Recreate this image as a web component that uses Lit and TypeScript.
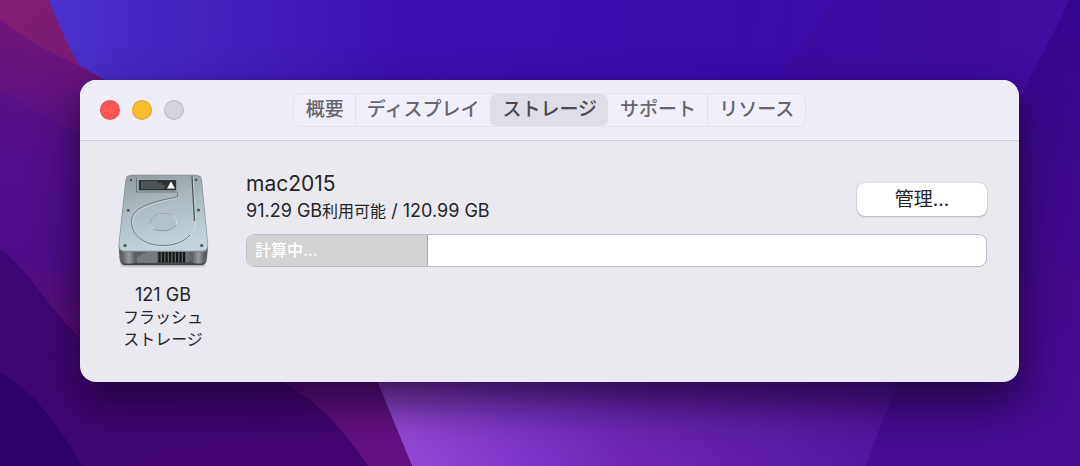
import { LitElement, html, css, svg } from "lit";
import { customElement, state } from "lit/decorators.js";
import { classMap } from "lit/directives/class-map.js";

@customElement("desktop-wallpaper")
class DesktopWallpaper extends LitElement {
  static styles = css`
    :host {
      display: block;
    }
    .art {
      display: block;
      width: 100%;
      height: 100%;
    }
  `;

  render() {
    return html`
      <svg class="art" viewBox="0 0 1080 466" preserveAspectRatio="xMidYMid slice" aria-hidden="true">
        <defs>
          <linearGradient id="sky" gradientUnits="userSpaceOnUse" x1="60" y1="40" x2="1040" y2="60">
            <stop offset="0" stop-color="#4a30cc" />
            <stop offset="0.12" stop-color="#4424c0" />
            <stop offset="0.35" stop-color="#3c10b2" />
            <stop offset="0.7" stop-color="#390cac" />
            <stop offset="1" stop-color="#400fa4" />
          </linearGradient>
          <linearGradient id="east" x1="0" y1="0" x2="0" y2="1">
            <stop offset="0" stop-color="#34068e" />
            <stop offset="0.35" stop-color="#3c0a8c" />
            <stop offset="0.6" stop-color="#420b8c" />
            <stop offset="1" stop-color="#460e92" />
          </linearGradient>
          <linearGradient id="rose" gradientUnits="userSpaceOnUse" x1="10" y1="0" x2="90" y2="80">
            <stop offset="0" stop-color="#821d74" />
            <stop offset="1" stop-color="#741a74" />
          </linearGradient>
          <linearGradient id="west" gradientUnits="userSpaceOnUse" x1="60" y1="40" x2="20" y2="330">
            <stop offset="0" stop-color="#6c1479" />
            <stop offset="0.4" stop-color="#57108a" />
            <stop offset="0.75" stop-color="#500e86" />
            <stop offset="1" stop-color="#5c0e78" />
          </linearGradient>
          <linearGradient id="deep" x1="0" y1="0" x2="1" y2="1">
            <stop offset="0" stop-color="#3c0876" />
            <stop offset="1" stop-color="#440472" />
          </linearGradient>
          <linearGradient id="glow" gradientUnits="userSpaceOnUse" x1="400" y1="466" x2="900" y2="420">
            <stop offset="0" stop-color="#9448d2" />
            <stop offset="0.25" stop-color="#7c36c6" />
            <stop offset="0.5" stop-color="#6a24b0" />
            <stop offset="0.8" stop-color="#5a1aa4" />
            <stop offset="1" stop-color="#50149c" />
          </linearGradient>
        </defs>
        <rect width="1080" height="466" fill="url(#sky)" />
        <path d="M835 0C810 40 785 60 770 100H1080V0Z" fill="#3e0c9a" opacity="0.45" />
        <path d="M1069 0C1052 40 1034 66 1020 100L860 466H1080V0Z" fill="url(#east)" />
        <path d="M300 300H920C910 370 880 420 866 466H300Z" fill="url(#glow)" />
        <path d="M0 0H49C60 28 70 50 80 66L110 84V250H0Z" fill="url(#rose)" />
        <path d="M0 19C24 38 44 50 80 66C94 73 102 78 112 84L300 300L368 360L412 466H0Z" fill="url(#west)" />
        <path d="M0 90C20 98 48 122 84 135V270H0Z" fill="#480e8e" opacity="0.3" />
        <path d="M200 300H344L412 466H280Z" fill="#641082" />
        <path d="M0 250C25 264 45 304 80 338L140 360H240C310 390 340 424 368 466H0Z" fill="url(#deep)" />
        <path d="M0 372C36 394 58 424 82 466H0Z" fill="#2f0068" />
      </svg>
    `;
  }
}

@customElement("drive-icon")
class DriveIcon extends LitElement {
  static styles = css`
    :host {
      display: block;
    }
    .drive {
      display: block;
      width: 100%;
      height: auto;
    }
  `;

  render() {
    const screws = [
      [14, 8],
      [79, 7.8],
      [11.3, 38.3],
      [81.5, 38],
      [8, 73.5],
      [84.7, 73.5],
    ];
    const vents = [0, 1, 2, 3, 4, 5, 6, 7];
    return html`
      <svg class="drive" viewBox="0 0 92 96" role="img" aria-label="内蔵ドライブ">
        <defs>
          <linearGradient id="lid" x1="0" y1="0" x2="0.25" y2="1">
            <stop offset="0" stop-color="#909b9f" />
            <stop offset="0.45" stop-color="#abbac0" />
            <stop offset="1" stop-color="#c2d3da" />
          </linearGradient>
          <linearGradient id="side" x1="0" y1="0" x2="0" y2="1">
            <stop offset="0" stop-color="#4b4f51" />
            <stop offset="0.7" stop-color="#66696b" />
            <stop offset="1" stop-color="#3c3e3f" />
          </linearGradient>
          <linearGradient id="post" x1="0" y1="0" x2="1" y2="0">
            <stop offset="0" stop-color="#5c6062" />
            <stop offset="0.5" stop-color="#979b9d" />
            <stop offset="1" stop-color="#55595b" />
          </linearGradient>
          <filter id="soft" x="-10%" y="-100%" width="120%" height="300%">
            <feGaussianBlur stdDeviation="1.2" />
          </filter>
        </defs>
        <rect x="4" y="89" width="84" height="5" rx="2.5" fill="#55565c" opacity="0.6" filter="url(#soft)" />
        <path d="M1.800 74H91L90 87Q89 93 84 93H9Q3.500 93 2.500 87Z" fill="url(#side)" />
        <rect x="5" y="76" width="14" height="15.500" rx="4" fill="url(#post)" />
        <rect x="75" y="76" width="13" height="15.500" rx="4" fill="url(#post)" />
        <path d="M20 86C26 80 34 79 40 79V91H20Z" fill="#777b7d" />
        <path d="M68 79H72V90H68Z" fill="#6b6f70" />
        ${vents.map((i) => svg`<rect x=${41.500 + i * 3.5} y="80" width="2.200" height="10.500" fill="#161718" />`)}
        <path
          d="M15 2.800Q9 2.800 8.300 9L1.500 73Q1.200 80 7 80H86Q91.500 80 91.200 73L85 9Q84.300 2.800 79 2.800Z"
          fill="#7f8b8f"
        />
        <path
          d="M15 3.600Q9.600 3.600 9 9.500L2.200 72Q2 78.800 7.500 78.800H85.500Q90.800 78.800 90.500 72L84.300 9.500Q83.600 3.600 78.500 3.600Z"
          fill="url(#lid)"
        />
        <path d="M19.500 6V20H60.500" fill="none" stroke="#66727a" stroke-width="0.900" />
        <path
          d="M60.700 20.500V26C47 28.500 36 31.500 28.500 35C19.500 39 15.500 44 15.500 50C15.500 65 29 74.500 46 74.500C62 74.500 78.500 66 78.500 50L76 5"
          fill="none"
          stroke="#d3e0e4"
          stroke-width="0.800"
        />
        <path
          d="M60.500 20.500V25C46 27.500 35 30.500 27.500 34C18.500 38 14.500 43 14.500 49.500C14.500 64 28 73.500 46 73.500C57 73.500 67 70 73 63"
          fill="none"
          stroke="#66737a"
          stroke-width="0.900"
        />
        <path d="M75 4.500L77.500 49" fill="none" stroke="#475054" stroke-width="1.200" />
        <ellipse cx="46.300" cy="50" rx="13.500" ry="8.700" fill="#b3c2c8" stroke="#dde9ed" stroke-width="0.800" />
        <path d="M33.300 52.500C32 46 38 41.300 46.300 41.300C50 41.300 53 42 55.500 43.500" fill="none" stroke="#8a969b" stroke-width="0.900" />
        <path d="M37 57C43 60 55 59.500 59 53" fill="none" stroke="#7b878c" stroke-width="0.900" />
        <rect x="21.300" y="7.500" width="38.400" height="11.300" fill="#aab6ba" />
        <rect x="21.800" y="8" width="37.400" height="10.300" fill="#2e3234" />
        <path d="M24 10H41M24 12H45M24 14H48M24 16H47" stroke="#777d80" stroke-width="0.900" />
        <path d="M54 9.500L58 16.500H50Z" fill="#ffffff" />
        ${screws.map(
          ([x, y]) => svg`
            <circle cx=${x} cy=${y} r="2.100" fill="#b4c1c6" />
            <circle cx=${x} cy=${y} r="1.500" fill="#4d575b" />
          `,
        )}
      </svg>
    `;
  }
}

@customElement("app-root")
class AppRoot extends LitElement {
  static styles = css`
    :host {
      display: block;
      font-family: Inter, "Noto Sans CJK JP", sans-serif;
      color: #252429;
    }
    button {
      margin: 0;
      padding: 0;
      border: 0;
      background: none;
      color: inherit;
      font: inherit;
    }
    .desktop {
      position: relative;
      box-sizing: border-box;
      min-height: 100vh;
      padding: 80px 61px 80px 80px;
      overflow: hidden;
    }
    .wallpaper {
      position: absolute;
      inset: 0;
    }
    .window {
      position: relative;
      border-radius: 16px;
      background: #eae9f0;
      box-shadow:
        0 0 1px rgba(10, 0, 40, 0.6),
        0 20px 44px rgba(20, 0, 40, 0.75);
    }
    .titlebar {
      display: grid;
      grid-template-columns: 1fr auto 1fr;
      align-items: center;
      height: 60px;
      padding: 0 20px;
      border-bottom: 1px solid #d0cfd8;
      border-radius: 16px 16px 0 0;
      background: #efedf7;
    }
    .lights {
      display: flex;
      gap: 12px;
    }
    .light {
      box-sizing: border-box;
      width: 20px;
      height: 20px;
      border: 1px solid rgba(0, 0, 0, 0.12);
      border-radius: 50%;
    }
    .close {
      background: #fc5753;
    }
    .minimize {
      background: #fdbc2e;
    }
    .zoom {
      background: #d5d3dc;
    }
    .tabs {
      display: flex;
      border: 1px solid #e4e2eb;
      border-radius: 8px;
      background: #f1eff9;
    }
    .tab {
      padding: 0 11px;
      border-left: 1px solid #e4e2eb;
      color: #66656d;
      font-size: 19px;
      font-weight: 500;
      line-height: 32px;
    }
    .tab:first-child,
    .selected,
    .selected + .tab {
      border-left-color: transparent;
    }
    .selected {
      border-radius: 7px;
      background: #dfdde6;
      color: #4a494f;
    }
    .content {
      display: flex;
      gap: 34px;
      padding: 31px 32px 32px 34px;
    }
    .device {
      flex: none;
      display: flex;
      flex-direction: column;
      align-items: center;
      gap: 16px;
      width: 98px;
    }
    .drive {
      width: 92px;
    }
    .caption {
      margin: 0;
      text-align: center;
      font-size: 16px;
      line-height: 22px;
    }
    .figure {
      font-size: 18px;
    }
    .volume {
      flex: 1;
      min-width: 0;
    }
    .summary {
      display: flex;
      justify-content: space-between;
      align-items: center;
      margin-bottom: 8px;
    }
    .name {
      margin: 0;
      font-size: 21px;
      font-weight: 400;
      line-height: 24px;
    }
    .usage {
      margin: 0;
      font-size: 16px;
      line-height: 30px;
    }
    .manage {
      width: 130px;
      border-radius: 8px;
      background: #ffffff;
      box-shadow:
        0 0 1px rgba(0, 0, 0, 0.3),
        0 1px 2px rgba(0, 0, 0, 0.2);
      font-size: 19px;
      line-height: 33px;
    }
    .bar {
      display: flex;
      border: 1px solid #bdbcc3;
      border-radius: 8px;
      background: #ffffff;
      overflow: hidden;
    }
    .segment {
      box-sizing: border-box;
      padding-left: 8px;
      border-right: 1px solid #a9a9ab;
      background: #d3d3d4;
      color: #ffffff;
      font-size: 16px;
      font-weight: 500;
      line-height: 31px;
      white-space: nowrap;
    }
  `;

  @state() private current = "ストレージ";

  private tabs = ["概要", "ディスプレイ", "ストレージ", "サポート", "リソース"];
  private total = 120.99;
  private free = 91.29;

  render() {
    const used = ((this.total - this.free) / this.total) * 100;
    return html`
      <div class="desktop">
        <desktop-wallpaper class="wallpaper"></desktop-wallpaper>
        <main class="window">
          <header class="titlebar">
            <div class="lights">
              <button class="light close" aria-label="閉じる"></button>
              <button class="light minimize" aria-label="しまう"></button>
              <button class="light zoom" aria-label="拡大" disabled></button>
            </div>
            <nav class="tabs" role="tablist">
              ${this.tabs.map(
                (name) => html`<button
                  class=${classMap({ tab: true, selected: name === this.current })}
                  role="tab"
                  aria-selected=${name === this.current}
                  @click=${() => (this.current = name)}
                >${name}</button>`,
              )}
            </nav>
          </header>
          <section class="content">
            <div class="device">
              <drive-icon class="drive"></drive-icon>
              <p class="caption"><span class="figure">121 GB</span><br />フラッシュ<br />ストレージ</p>
            </div>
            <div class="volume">
              <div class="summary">
                <div>
                  <h1 class="name">mac2015</h1>
                  <p class="usage"><span class="figure">${this.free} GB</span>利用可能<span class="figure"> / ${this.total} GB</span></p>
                </div>
                <button class="manage">管理...</button>
              </div>
              <div class="bar">
                <div class="segment" style="width: ${used}%">計算中...</div>
              </div>
            </div>
          </section>
        </main>
      </div>
    `;
  }
}
